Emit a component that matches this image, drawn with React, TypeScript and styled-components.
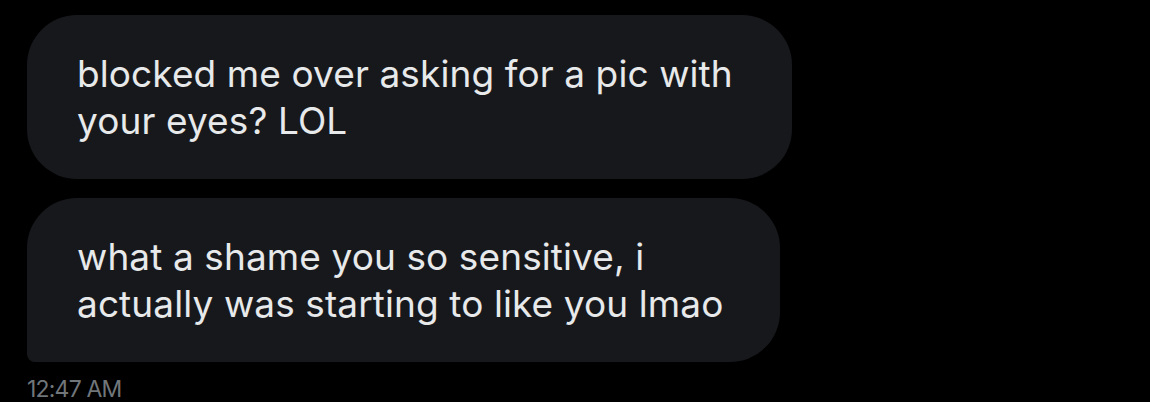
import React from "react";
import styled, { createGlobalStyle } from "styled-components";

const GlobalStyle = createGlobalStyle`
  html, body {
    margin: 0;
    padding: 0;
    background: #000000;
  }
  body {
    font-family: Inter, "Noto Sans", sans-serif;
    -webkit-font-smoothing: antialiased;
  }
`;

const Thread = styled.div`
  display: flex;
  flex-direction: column;
  align-items: flex-start;
  width: 1150px;
  height: 402px;
  box-sizing: border-box;
  padding: 15px 0 0 27px;
  background: #000000;
  overflow: hidden;
`;

const Bubble = styled.div<{ $width: number; $last?: boolean }>`
  width: ${(p) => p.$width}px;
  box-sizing: border-box;
  padding: 35px 40px 35px 50px;
  margin-bottom: 19px;
  background: #17181c;
  color: #e7e9ea;
  font-size: 37px;
  line-height: 47px;
  letter-spacing: 0.1px;
  border-radius: ${(p) => (p.$last ? "50px 50px 50px 8px" : "50px")};
`;

const Line = styled.div`
  white-space: nowrap;
`;

const Time = styled.div`
  margin-top: -4px;
  color: #71767b;
  font-size: 23px;
  letter-spacing: -0.8px;
  line-height: 24px;
`;

const messages = [
  { width: 765, lines: ["blocked me over asking for a pic with", "your eyes? LOL"] },
  {
    width: 753,
    lines: ["what a shame you so sensitive, i", "actually was starting to like you lmao"],
  },
];

export default function App() {
  return (
    <>
      <GlobalStyle />
      <Thread>
        {messages.map((m, i) => (
          <Bubble key={i} $width={m.width} $last={i === messages.length - 1}>
            {m.lines.map((l) => (
              <Line key={l}>{l}</Line>
            ))}
          </Bubble>
        ))}
        <Time>12:47 AM</Time>
      </Thread>
    </>
  );
}
